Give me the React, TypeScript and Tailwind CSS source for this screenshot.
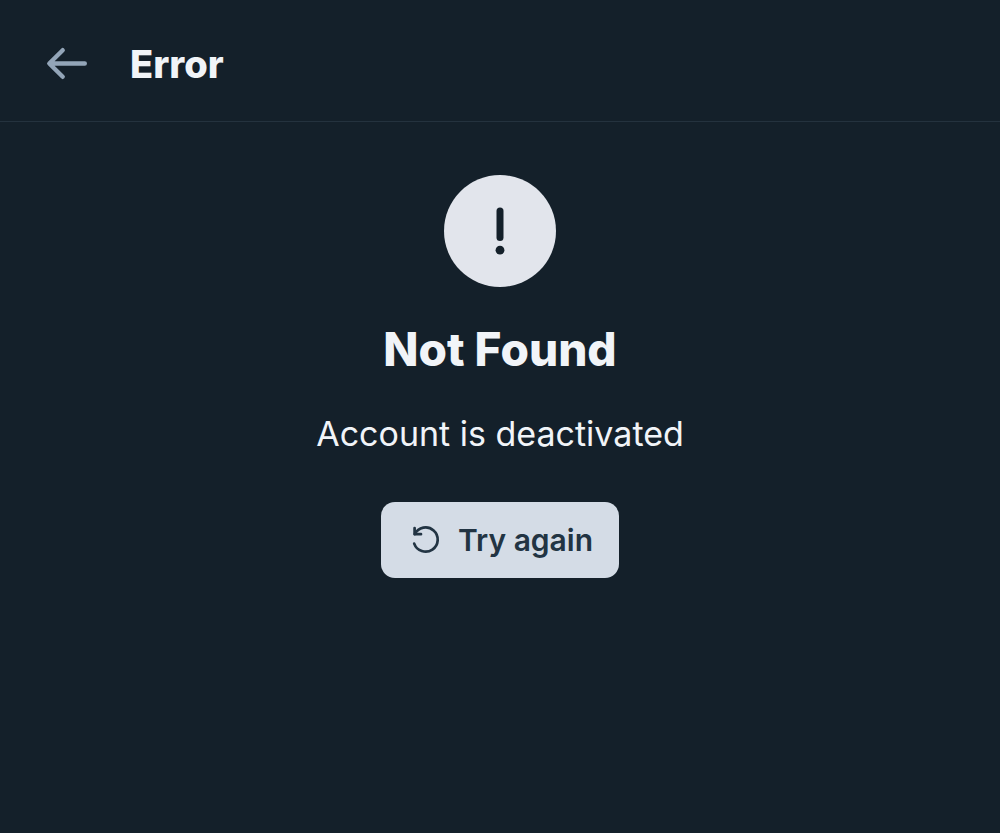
const ArrowLeftIcon = () => (
  <svg
    viewBox="0 0 42 34"
    className="h-[34px] w-[42px]"
    fill="none"
    stroke="currentColor"
    strokeWidth="4.4"
    strokeLinecap="round"
    strokeLinejoin="round"
    aria-hidden="true"
  >
    <path d="M38.8 16.5H4M16.7 3.2 3.3 16.5 16.7 29.8" />
  </svg>
);

const ExclamationIcon = () => (
  <svg viewBox="0 0 112 112" className="h-28 w-28" aria-hidden="true">
    <circle cx="56" cy="56" r="56" fill="#e2e5ec" />
    <path d="M56 36v26.5" stroke="#14202a" strokeWidth="7" strokeLinecap="round" />
    <circle cx="56" cy="75.2" r="4.4" fill="#14202a" />
  </svg>
);

const RetryIcon = () => (
  <svg
    viewBox="0 0 30 30"
    className="h-[30px] w-[30px]"
    fill="none"
    stroke="currentColor"
    strokeWidth="2.7"
    strokeLinecap="round"
    strokeLinejoin="round"
    aria-hidden="true"
  >
    <path d="M3.6 3.1v6.1h6.4" />
    <path d="M3.8 9.1A12.1 12.1 0 1 1 3.2 18.6" />
  </svg>
);

const App = () => {
  return (
    <div className="min-h-screen bg-[#14202a] font-['Inter',sans-serif] text-[#f1f4f8]">
      <header className="flex items-center gap-[42px] border-b border-[#24323e] px-[46px] pt-10 pb-[33px]">
        <button type="button" aria-label="Go back" className="text-[#93a5b8]">
          <ArrowLeftIcon />
        </button>
        <h1 className="text-[38px] leading-[48px] font-extrabold">Error</h1>
      </header>

      <main className="flex flex-col items-center px-6 pt-[53px]">
        <ExclamationIcon />
        <h2 className="mt-8 text-[46px] leading-[60px] font-extrabold">Not Found</h2>
        <p className="mt-[31px] text-[34px] leading-[48px]">Account is deactivated</p>
        <button
          type="button"
          className="mt-11 flex h-[76px] items-center gap-[17px] rounded-[14px] bg-[#d4dce6] pr-[26px] pl-[30px] text-[30px] font-semibold text-[#223443]"
        >
          <RetryIcon />
          Try again
        </button>
      </main>
    </div>
  );
};

export default App;
